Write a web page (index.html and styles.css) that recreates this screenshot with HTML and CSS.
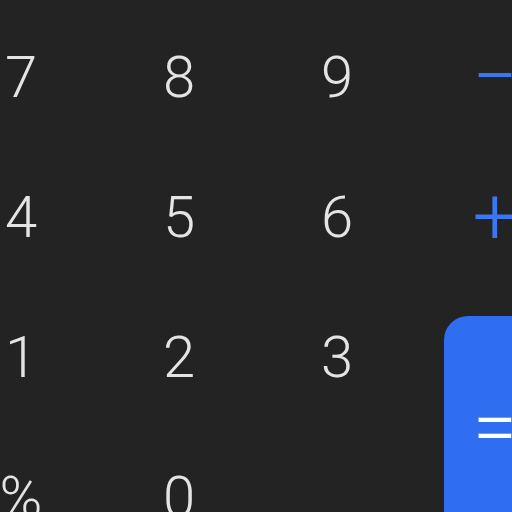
FILE: index.html
```html
<!DOCTYPE html>
<html>
<head>
<meta charset="utf-8">
<link rel="stylesheet" href="styles.css">
</head>
<body>
<div class="pad">
  <button class="key">7</button>
  <button class="key">8</button>
  <button class="key">9</button>
  <button class="key op">−</button>
  <button class="key">4</button>
  <button class="key">5</button>
  <button class="key">6</button>
  <button class="key op">+</button>
  <button class="key">1</button>
  <button class="key">2</button>
  <button class="key">3</button>
  <button class="key eq">=</button>
  <button class="key">%</button>
  <button class="key">0</button>
  <button class="key">.</button>
</div>
</body>
</html>
```
FILE: styles.css
```css
html, body {
  margin: 0;
  padding: 0;
  background: #232323;
  overflow: hidden;
  width: 512px;
  height: 512px;
}
.pad {
  display: grid;
  grid-template-columns: repeat(4, 158px);
  grid-auto-rows: 140px;
  margin-left: -58px;
  margin-top: 7px;
}
.key {
  background: none;
  border: none;
  padding: 0;
  margin: 0;
  font-family: Roboto, "Noto Sans", sans-serif;
  font-size: 58px;
  font-weight: 300;
  color: #e4e4e4;
  display: flex;
  align-items: center;
  justify-content: center;
  line-height: 1;
}
.op {
  color: #3a78f2;
  font-size: 80px;
}
.eq {
  grid-row: span 2;
  background: #2f6ef0;
  color: #ffffff;
  font-size: 80px;
  border-radius: 24px;
  margin: 29px 28px;
}
```
